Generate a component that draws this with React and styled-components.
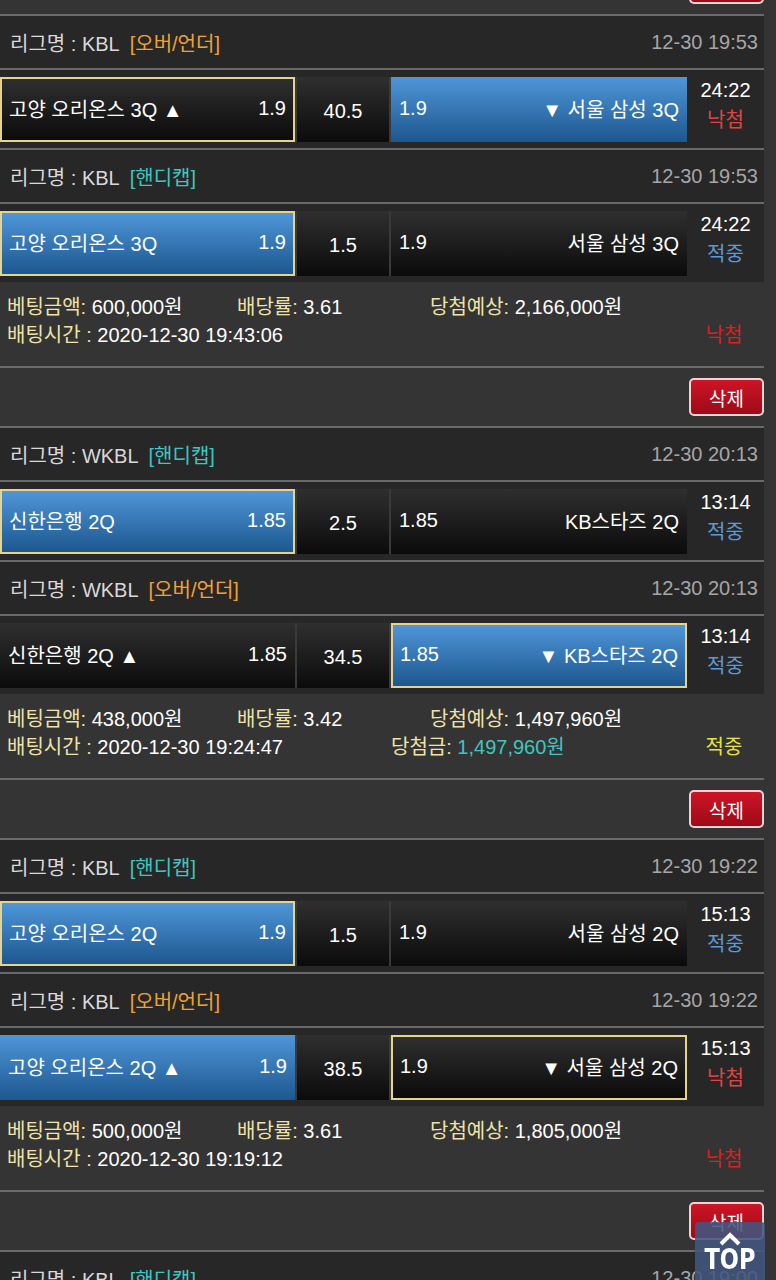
import React from 'react'
import styled, { createGlobalStyle } from 'styled-components'

const GlobalStyle = createGlobalStyle`
  body {
    margin: 0;
    background: #343434;
    font-family: "Liberation Sans", "Noto Sans CJK KR", sans-serif;
    overflow: hidden;
  }
`

const colors = {
  line: '#6a6a6a',
  dark: '#272727',
  page: '#343434',
  cream: '#efe3a8',
  orange: '#f0a232',
  teal: '#3fc6bf',
}

const List = styled.div`
  width: 764px;
`

const Header = styled.div`
  display: flex;
  align-items: center;
  height: 52px;
  padding: 0 6px 0 10px;
  border-top: 2px solid ${colors.line};
  background: ${colors.dark};
  color: #d9d9d9;
  font-size: 20px;
  .tag {
    margin-left: 10px;
    color: ${p => (p.$type === 'ou' ? colors.orange : colors.teal)};
  }
  .date {
    margin-left: auto;
    color: #a6a6a6;
  }
`

const MatchRow = styled.div`
  display: flex;
  height: 80px;
  padding: 7px 0 6px;
  box-sizing: border-box;
  border-top: 2px solid ${colors.line};
  background: ${colors.dark};
`

const Boxes = styled.div`
  display: grid;
  grid-template-columns: 295px 92px 296px;
  column-gap: 2px;
  background: #3a3a3a;
`

const Box = styled.div`
  display: flex;
  align-items: center;
  justify-content: ${p => (p.$center ? 'center' : 'space-between')};
  height: 65px;
  box-sizing: border-box;
  padding: ${p => (p.$center ? '3px 0 0' : '0 7px 2px 7px')};
  color: #fff;
  font-size: 20px;
  background: ${p =>
    p.$tone === 'blue'
      ? 'linear-gradient(#4f96d8, #1d578f)'
      : 'linear-gradient(#2f2f2f, #0b0b0b)'};
  border: 2px solid ${p => (p.$picked ? '#e6d38c' : 'transparent')};
  ${p => !p.$picked && 'border-width: 0; padding-left: 8px; padding-right: 8px;'}
  ${p => p.$center && 'padding-left: 0; padding-right: 0;'}
`

const TimeCol = styled.div`
  flex: 1;
  display: flex;
  flex-direction: column;
  align-items: center;
  font-size: 20px;
  .clock {
    color: #fff;
    line-height: 26px;
  }
  .res {
    line-height: 35px;
    color: ${p => (p.$result === 'win' ? '#5b9ad6' : '#e04545')};
  }
`

const Info = styled.div`
  height: 84px;
  box-sizing: border-box;
  padding: 9px 0 0 7px;
  font-size: 20px;
  color: #fff;
`

const InfoLine = styled.div`
  display: flex;
  align-items: center;
  height: 28px;
`

const Cell = styled.div`
  width: ${p => (p.$w ? `${p.$w}px` : 'auto')};
  flex: ${p => (p.$w ? 'none' : '1')};
  white-space: nowrap;
  .k {
    color: ${colors.cream};
  }
  .won {
    color: ${colors.teal};
  }
`

const Status = styled.div`
  width: 80px;
  text-align: center;
  color: ${p => (p.$result === 'win' ? '#e9e33c' : '#dd1f1f')};
`

const DeleteBar = styled.div`
  display: flex;
  justify-content: flex-end;
  box-sizing: border-box;
  padding-top: 10px;
  border-top: ${p => (p.$first ? 'none' : `2px solid ${colors.line}`)};
  height: ${p => (p.$first ? '58px' : '60px')};
  margin-top: ${p => (p.$first ? '-44px' : '0')};
`

const DeleteBtn = styled.button`
  width: 75px;
  height: 38px;
  border: 2px solid #f1d3d6;
  border-radius: 5px;
  background: linear-gradient(#cc1526, #9e0a16);
  color: #fff;
  font-family: inherit;
  font-size: 19px;
  padding: 0;
`

const TopBtn = styled.div`
  position: fixed;
  right: 11px;
  bottom: 0;
  width: 70px;
  height: 58px;
  border-radius: 4px 4px 0 0;
  background: rgba(66, 86, 126, 0.88);
  display: flex;
  flex-direction: column;
  align-items: center;
  padding-top: 9px;
  box-sizing: border-box;
  span {
    color: #fff;
    font-family: "DejaVu Sans Condensed", "DejaVu Sans", sans-serif;
    font-weight: bold;
    font-size: 25px;
    line-height: 26px;
    transform: scaleY(1.1);
  }
`

const slips = [
  {
    games: [
      {
        league: 'KBL', type: 'ou', date: '12-30 19:53',
        home: { name: '고양 오리온스 3Q ▲', odds: '1.9', tone: 'dark', picked: true },
        line: '40.5',
        away: { name: '▼ 서울 삼성 3Q', odds: '1.9', tone: 'blue' },
        time: '24:22', result: 'lose',
      },
      {
        league: 'KBL', type: 'hc', date: '12-30 19:53',
        home: { name: '고양 오리온스 3Q', odds: '1.9', tone: 'blue', picked: true },
        line: '1.5',
        away: { name: '서울 삼성 3Q', odds: '1.9', tone: 'dark' },
        time: '24:22', result: 'win',
      },
    ],
    amount: '600,000원', rate: '3.61', expect: '2,166,000원',
    placed: '2020-12-30 19:43:06', status: 'lose',
  },
  {
    games: [
      {
        league: 'WKBL', type: 'hc', date: '12-30 20:13',
        home: { name: '신한은행 2Q', odds: '1.85', tone: 'blue', picked: true },
        line: '2.5',
        away: { name: 'KB스타즈 2Q', odds: '1.85', tone: 'dark' },
        time: '13:14', result: 'win',
      },
      {
        league: 'WKBL', type: 'ou', date: '12-30 20:13',
        home: { name: '신한은행 2Q ▲', odds: '1.85', tone: 'dark' },
        line: '34.5',
        away: { name: '▼ KB스타즈 2Q', odds: '1.85', tone: 'blue', picked: true },
        time: '13:14', result: 'win',
      },
    ],
    amount: '438,000원', rate: '3.42', expect: '1,497,960원',
    placed: '2020-12-30 19:24:47', payout: '1,497,960원', status: 'win',
  },
  {
    games: [
      {
        league: 'KBL', type: 'hc', date: '12-30 19:22',
        home: { name: '고양 오리온스 2Q', odds: '1.9', tone: 'blue', picked: true },
        line: '1.5',
        away: { name: '서울 삼성 2Q', odds: '1.9', tone: 'dark' },
        time: '15:13', result: 'win',
      },
      {
        league: 'KBL', type: 'ou', date: '12-30 19:22',
        home: { name: '고양 오리온스 2Q ▲', odds: '1.9', tone: 'blue' },
        line: '38.5',
        away: { name: '▼ 서울 삼성 2Q', odds: '1.9', tone: 'dark', picked: true },
        time: '15:13', result: 'lose',
      },
    ],
    amount: '500,000원', rate: '3.61', expect: '1,805,000원',
    placed: '2020-12-30 19:19:12', status: 'lose',
  },
  {
    games: [
      {
        league: 'KBL', type: 'hc', date: '12-30 19:00',
        home: { name: '고양 오리온스 1Q', odds: '1.9', tone: 'blue', picked: true },
        line: '1.5',
        away: { name: '서울 삼성 1Q', odds: '1.9', tone: 'dark' },
        time: '10:00', result: 'win',
      },
    ],
    amount: '100,000원', rate: '1.9', expect: '190,000원',
    placed: '2020-12-30 18:50:00', status: 'win',
  },
]

const typeLabel = { ou: '[오버/언더]', hc: '[핸디캡]' }
const resultLabel = { win: '적중', lose: '낙첨' }

const Game = ({ g }) => (
  <>
    <Header $type={g.type}>
      <span>리그명 : {g.league}</span>
      <span className="tag">{typeLabel[g.type]}</span>
      <span className="date">{g.date}</span>
    </Header>
    <MatchRow>
      <Boxes>
        <Box $tone={g.home.tone} $picked={g.home.picked}>
          <span>{g.home.name}</span>
          <span>{g.home.odds}</span>
        </Box>
        <Box $center>{g.line}</Box>
        <Box $tone={g.away.tone} $picked={g.away.picked}>
          <span>{g.away.odds}</span>
          <span>{g.away.name}</span>
        </Box>
      </Boxes>
      <TimeCol $result={g.result}>
        <span className="clock">{g.time}</span>
        <span className="res">{resultLabel[g.result]}</span>
      </TimeCol>
    </MatchRow>
  </>
)

const Slip = ({ s }) => (
  <>
    {s.games.map((g, i) => <Game key={i} g={g} />)}
    <Info>
      <InfoLine>
        <Cell $w={230}><span className="k">베팅금액:</span> {s.amount}</Cell>
        <Cell $w={193}><span className="k">배당률:</span> {s.rate}</Cell>
        <Cell><span className="k">당첨예상:</span> {s.expect}</Cell>
      </InfoLine>
      <InfoLine>
        <Cell $w={384}><span className="k">배팅시간 :</span> {s.placed}</Cell>
        <Cell>
          {s.payout && (
            <><span className="k">당첨금:</span> <span className="won">{s.payout}</span></>
          )}
        </Cell>
        <Status $result={s.status}>{resultLabel[s.status]}</Status>
      </InfoLine>
    </Info>
    <DeleteBar>
      <DeleteBtn>삭제</DeleteBtn>
    </DeleteBar>
  </>
)

const App = () => (
  <>
    <GlobalStyle />
    <List>
      <DeleteBar $first>
        <DeleteBtn>삭제</DeleteBtn>
      </DeleteBar>
      {slips.map((s, i) => <Slip key={i} s={s} />)}
    </List>
    <TopBtn>
      <svg width="24" height="16" viewBox="0 0 24 16">
        <polyline points="3,13 12,4 21,13" fill="none" stroke="#fff" strokeWidth="4" />
      </svg>
      <span>TOP</span>
    </TopBtn>
  </>
)

export default App
